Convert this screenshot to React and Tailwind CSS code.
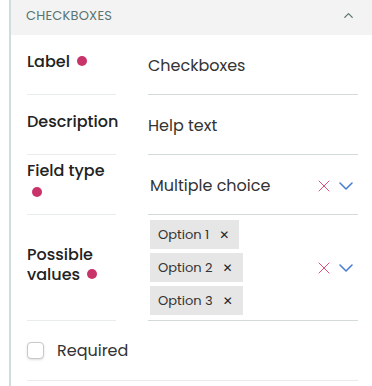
import { X, ChevronDown, ChevronUp } from "lucide-react";

const font = { fontFamily: "Poppins, 'Open Sans', 'DejaVu Sans', sans-serif" };

function Dot() {
    return <span className="inline-block w-[10px] h-[10px] rounded-full bg-[#c8336a] align-middle ml-[7px] -mt-[2px]" />;
}

function Tag({ text }) {
    return (
        <div className="flex items-center bg-[#e6e6e6] h-[29px] pl-[8px] pr-[10px] text-[13px] text-[#333]">
            <span>{text}</span>
            <span className="ml-[10px] text-[#222] font-bold text-[12px]">✕</span>
        </div>
    );
}

function Controls() {
    return (
        <div className="flex items-center">
            <X size={20} strokeWidth={1.2} className="text-[#e0507a]" />
            <ChevronDown size={24} strokeWidth={1.6} className="text-[#4a7fd4]" />
        </div>
    );
}

function Row({ label, children, height }) {
    return (
        <div className={`flex ${height}`}>
            <div className="w-[89px] border-b border-[#e8ecec] flex items-center pb-[6px] text-[16px] font-medium text-[#222] leading-[20px]">
                {label}
            </div>
            <div className="ml-[32px] flex-1 border-b border-[#d3dada] flex items-center pt-[2px] text-[16px] text-[#333]">
                {children}
            </div>
        </div>
    );
}

export default function App() {
    return (
        <div className="w-[372px] h-[386px] bg-white" style={font}>
            <div className="ml-[9px] border-l-2 border-[#cfdcdc] h-full">
                <div className="h-[35px] bg-[#f3f3f3] flex items-center justify-between pl-[15px] pr-[16px] pb-[4px]">
                    <span className="text-[13px] text-[#5a7470] tracking-[0.2px]">CHECKBOXES</span>
                    <ChevronUp size={15} strokeWidth={2} className="text-[#5a7470]" />
                </div>
                <div className="pl-[16px] pr-[14px]">
                    <Row height="h-[60px]" label={<span>Label<Dot /></span>}>
                        <span>Checkboxes</span>
                    </Row>
                    <Row height="h-[60px]" label={<span>Description</span>}>
                        <span>Help text</span>
                    </Row>
                    <Row
                        height="h-[60px]"
                        label={
                            <div className="flex flex-col">
                                <span>Field type</span>
                                <span className="mt-[2px] -ml-[2px]"><Dot /></span>
                            </div>
                        }
                    >
                        <div className="flex-1 flex items-center justify-between pl-[2px]">
                            <span>Multiple choice</span>
                            <Controls />
                        </div>
                    </Row>
                    <Row
                        height="h-[106px]"
                        label={
                            <div>
                                Possible<br />values<Dot />
                            </div>
                        }
                    >
                        <div className="flex-1 flex items-center justify-between pl-[2px] -mt-[2px]">
                            <div className="flex flex-col gap-[4px] items-start">
                                <Tag text="Option 1" />
                                <Tag text="Option 2" />
                                <Tag text="Option 3" />
                            </div>
                            <Controls />
                        </div>
                    </Row>
                    <div className="h-[60px] border-b border-[#e8ecec] flex items-center">
                        <span className="w-[17px] h-[17px] rounded-[4px] border border-[#c8c8c8] shadow-sm bg-white" />
                        <span className="ml-[13px] text-[16px] text-[#333]">Required</span>
                    </div>
                </div>
            </div>
        </div>
    );
}
